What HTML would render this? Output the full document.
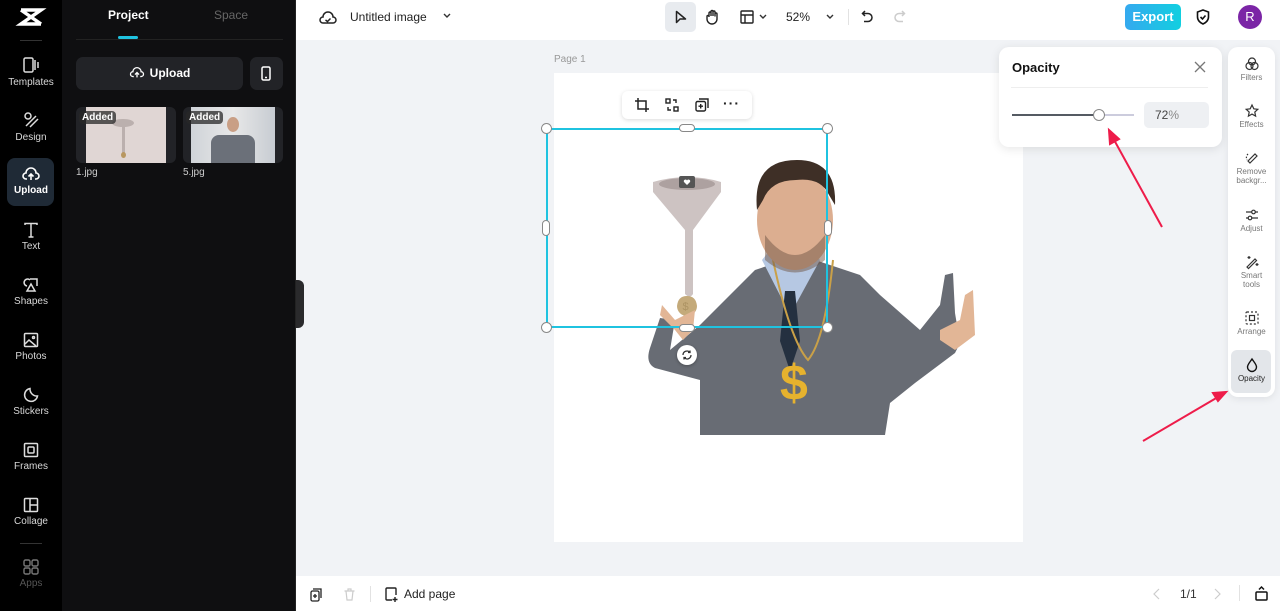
<!DOCTYPE html>
<html><head><meta charset="utf-8"><style>
*{box-sizing:border-box;margin:0;padding:0}
body{width:1280px;height:611px;overflow:hidden;font-family:"Liberation Sans",sans-serif;background:#f1f3f6;position:relative}
.abs{position:absolute}
.nav{left:0;top:0;width:62px;height:611px;background:#000}
.nav .it{position:absolute;left:0;width:62px;text-align:center;color:#d8d8d8;font-size:10px}
.nav .it svg{display:block;margin:0 auto 3px}
.panel{left:62px;top:0;width:234px;height:611px;background:#0f0f11;border-right:1px solid #222}
.top{left:296px;top:0;width:984px;height:40px;background:#fff}
.bot{left:296px;top:576px;width:984px;height:35px;background:#fff}
.rp{left:1228px;top:47px;width:47px;height:350px;background:#fff;border-radius:10px;box-shadow:0 2px 8px rgba(0,0,0,.08)}
.rp .it{position:absolute;left:0;width:47px;text-align:center;font-size:8px;color:#777;line-height:9px}
.rp .it svg{display:block;margin:0 auto 2px}
svg{overflow:visible}
</style></head><body>
<div class="abs nav">
 <svg class="abs" style="left:19px;top:8px" width="24" height="18" viewBox="0 0 24 18"><path d="M2 2h20L2 16h20M2 2l20 14" stroke="#fff" stroke-width="3.5" fill="none"/></svg>
 <div class="abs" style="left:20px;top:40px;width:22px;height:1px;background:#333"></div>
 <div class="it" style="top:56px"><svg width="18" height="18" viewBox="0 0 18 18" fill="none" stroke="#ddd" stroke-width="1.5"><rect x="2" y="2" width="9" height="14" rx="1.5"/><path d="M13 4v10M16 6v6"/></svg>Templates</div>
 <div class="it" style="top:111px"><svg width="18" height="18" viewBox="0 0 18 18" fill="none" stroke="#ddd" stroke-width="1.5"><circle cx="6" cy="5" r="3"/><path d="M4 15l10-10M8 16l8-8"/></svg>Design</div>
 <div class="abs" style="left:7px;top:158px;width:47px;height:48px;background:#1f2a36;border-radius:8px"></div>
 <div class="it" style="top:166px;color:#fff;font-weight:bold"><svg width="18" height="16" viewBox="0 0 18 16" fill="none" stroke="#fff" stroke-width="1.6"><path d="M5 13H4a3 3 0 0 1 0-6 5 5 0 0 1 10 0 3 3 0 0 1 0 6h-1M9 14V8M6.5 10.5L9 8l2.5 2.5"/></svg>Upload</div>
 <div class="it" style="top:222px"><svg width="16" height="16" viewBox="0 0 16 16" fill="none" stroke="#ddd" stroke-width="1.5"><path d="M2 3V1.5h12V3M8 1.5V15M5.5 15h5"/></svg>Text</div>
 <div class="it" style="top:277px"><svg width="16" height="16" viewBox="0 0 16 16" fill="none" stroke="#ddd" stroke-width="1.5"><path d="M4 9a3.5 3.5 0 1 1 3-6M7 2h7v7M8 7l-4 7h8z"/></svg>Shapes</div>
 <div class="it" style="top:332px"><svg width="16" height="16" viewBox="0 0 16 16" fill="none" stroke="#ddd" stroke-width="1.5"><rect x="1.5" y="1.5" width="13" height="13" rx="1"/><path d="M2 12l4-4 7 6"/><circle cx="10.5" cy="5.5" r="1"/></svg>Photos</div>
 <div class="it" style="top:387px"><svg width="16" height="16" viewBox="0 0 16 16" fill="none" stroke="#ddd" stroke-width="1.5"><path d="M14.5 9A6.5 6.5 0 1 1 7 1.5a7 7 0 0 0 7.5 7.5z"/></svg>Stickers</div>
 <div class="it" style="top:442px"><svg width="16" height="16" viewBox="0 0 16 16" fill="none" stroke="#ddd" stroke-width="1.5"><rect x="1.5" y="1.5" width="13" height="13" rx="1"/><rect x="5" y="5" width="6" height="6" rx="1"/></svg>Frames</div>
 <div class="it" style="top:497px"><svg width="16" height="16" viewBox="0 0 16 16" fill="none" stroke="#ddd" stroke-width="1.5"><rect x="1.5" y="1.5" width="13" height="13" rx="1"/><path d="M7 1.5v13M7 8h7.5"/></svg>Collage</div>
 <div class="abs" style="left:20px;top:543px;width:22px;height:1px;background:#333"></div>
 <div class="it" style="top:559px;color:#555"><svg width="16" height="16" viewBox="0 0 16 16" fill="none" stroke="#777" stroke-width="1.4"><rect x="1" y="1" width="6" height="6" rx="1.5"/><rect x="9" y="1" width="6" height="6" rx="1.5"/><rect x="1" y="9" width="6" height="6" rx="1.5"/><rect x="9" y="9" width="6" height="6" rx="1.5"/></svg>Apps</div>
</div>
<div class="abs panel">
 <div class="abs" style="left:46px;top:8px;font-size:12px;font-weight:bold;color:#fff">Project</div>
 <div class="abs" style="left:152px;top:8px;font-size:12px;color:#666">Space</div>
 <div class="abs" style="left:56px;top:36px;width:20px;height:3px;background:#1fc3e0;border-radius:2px"></div>
 <div class="abs" style="left:14px;top:39px;width:207px;height:1px;background:#222"></div>
 <div class="abs" style="left:14px;top:57px;width:167px;height:33px;background:#222327;border-radius:7px;color:#fff;font-size:12px;font-weight:bold;text-align:center;line-height:33px"><svg width="16" height="13" viewBox="0 0 18 16" style="vertical-align:-2px;margin-right:5px" fill="none" stroke="#fff" stroke-width="1.6"><path d="M5 13H4a3 3 0 0 1 0-6 5 5 0 0 1 10 0 3 3 0 0 1 0 6h-1M9 14V8M6.5 10.5L9 8l2.5 2.5"/></svg>Upload</div>
 <div class="abs" style="left:188px;top:57px;width:33px;height:33px;background:#222327;border-radius:7px"><svg class="abs" style="left:11px;top:9px" width="10" height="15" viewBox="0 0 10 15" fill="none" stroke="#fff" stroke-width="1.5"><rect x="1" y="1" width="8" height="13" rx="1.5"/><path d="M4 11.5h2"/></svg></div>
 <div class="abs" style="left:14px;top:107px;width:100px;height:56px;background:#222327;border-radius:6px;overflow:hidden"><div class="abs" style="left:10px;top:0;width:80px;height:56px;background:#e0d6d4"></div><div class="abs" style="left:36px;top:12px;width:22px;height:8px;background:#bbb0ae;border-radius:50%"></div><div class="abs" style="left:46px;top:20px;width:3px;height:26px;background:#bbb0ae"></div><div class="abs" style="left:45px;top:45px;width:5px;height:6px;background:#b89760;border-radius:50%"></div><div class="abs" style="left:3px;top:4px;background:rgba(40,40,40,.75);color:#fff;font-size:10px;font-weight:bold;padding:1px 3px;border-radius:4px">Added</div></div>
 <div class="abs" style="left:121px;top:107px;width:100px;height:56px;background:#222327;border-radius:6px;overflow:hidden"><div class="abs" style="left:8px;top:0;width:84px;height:56px;background:linear-gradient(90deg,#cfd3d8,#e8e8e8 50%,#c7ccd2)"></div><div class="abs" style="left:28px;top:28px;width:44px;height:28px;background:#6b7079;border-radius:8px 8px 0 0"></div><div class="abs" style="left:44px;top:10px;width:12px;height:15px;background:#c99f85;border-radius:50%"></div><div class="abs" style="left:3px;top:4px;background:rgba(40,40,40,.75);color:#fff;font-size:10px;font-weight:bold;padding:1px 3px;border-radius:4px">Added</div></div>
 <div class="abs" style="left:14px;top:167px;font-size:10px;color:#ccc">1.jpg</div>
 <div class="abs" style="left:121px;top:167px;font-size:10px;color:#ccc">5.jpg</div>
</div>
<div class="abs" style="left:296px;top:280px;width:8px;height:48px;background:#2a2a2c;border-radius:0 6px 6px 0"></div>
<div class="abs top">
 <svg class="abs" style="left:23px;top:10px" width="18" height="16" viewBox="0 0 18 16" fill="none" stroke="#222" stroke-width="1.5"><path d="M5 13H4a3 3 0 0 1 0-6 5 5 0 0 1 10 0 3 3 0 0 1 0 6H5zM6.5 10l2 1.5 3-3"/></svg>
 <div class="abs" style="left:54px;top:10px;font-size:12px;color:#222">Untitled image</div>
 <svg class="abs" style="left:147px;top:13px" width="8" height="6" viewBox="0 0 8 6" fill="none" stroke="#333" stroke-width="1.4"><path d="M1 1l3 3 3-3"/></svg>
 <div class="abs" style="left:369px;top:2px;width:31px;height:30px;background:#e8ebef;border-radius:5px"></div>
 <svg class="abs" style="left:379px;top:10px" width="12" height="14" viewBox="0 0 12 14" fill="none" stroke="#222" stroke-width="1.5"><path d="M1.5 1.5v11l3.5-3.5h5.5z" stroke-linejoin="round"/></svg>
 <svg class="abs" style="left:410px;top:9px" width="14" height="16" viewBox="0 0 14 16" fill="none" stroke="#222" stroke-width="1.4"><path d="M3 8V4a1 1 0 0 1 2 0v3V2.5a1 1 0 0 1 2 0V7V3a1 1 0 0 1 2 0v4.5V5a1 1 0 0 1 2 0v5a5 5 0 0 1-10 0V7.5a1 1 0 0 1 2 0z"/></svg>
 <svg class="abs" style="left:444px;top:10px" width="14" height="14" viewBox="0 0 14 14" fill="none" stroke="#222" stroke-width="1.4"><rect x="1" y="1" width="12" height="12" rx="1"/><path d="M1 5h12M5 5v8"/></svg>
 <svg class="abs" style="left:463px;top:14px" width="8" height="6" viewBox="0 0 8 6" fill="none" stroke="#333" stroke-width="1.4"><path d="M1 1l3 3 3-3"/></svg>
 <div class="abs" style="left:490px;top:10px;font-size:12px;color:#222">52%</div>
 <svg class="abs" style="left:530px;top:14px" width="8" height="6" viewBox="0 0 8 6" fill="none" stroke="#333" stroke-width="1.4"><path d="M1 1l3 3 3-3"/></svg>
 <div class="abs" style="left:552px;top:9px;width:1px;height:16px;background:#e2e2e2"></div>
 <svg class="abs" style="left:565px;top:10px" width="12" height="13" viewBox="0 0 12 13" fill="none" stroke="#222" stroke-width="1.5"><path d="M4 1L1.5 3.5 4 6M1.5 3.5H7a4 4 0 0 1 0 8H3"/></svg>
 <svg class="abs" style="left:598px;top:10px" width="12" height="13" viewBox="0 0 12 13" fill="none" stroke="#ccc" stroke-width="1.5"><path d="M8 1l2.5 2.5L8 6M10.5 3.5H5a4 4 0 0 0 0 8h4"/></svg>
 <div class="abs" style="left:829px;top:4px;width:56px;height:26px;border-radius:5px;background:linear-gradient(90deg,#35a9ef,#12cfe0);color:#fff;font-weight:bold;font-size:13px;text-align:center;line-height:26px">Export</div>
 <svg class="abs" style="left:900px;top:9px" width="14" height="16" viewBox="0 0 14 16" fill="none" stroke="#111" stroke-width="1.6"><path d="M7 1l5.5 2v5c0 3.5-3 6-5.5 7C4.5 14 1.5 11.5 1.5 8V3zM4.5 8l2 2 3-3.5"/></svg>
 <div class="abs" style="left:942px;top:5px;width:24px;height:24px;border-radius:50%;background:#7b25a6;color:#fff;font-size:13px;text-align:center;line-height:24px">R</div>
</div>
<div class="abs" style="left:554px;top:54px;font-size:10px;color:#999">Page 1</div>
<div class="abs" style="left:554px;top:73px;width:469px;height:469px;background:#fff"></div>
<!-- funnel -->
<svg class="abs" style="left:640px;top:170px" width="100" height="145" viewBox="0 0 100 145">
 <path d="M13 12q35-10 68 0v10L53 60v64q-3 5-8 0V60L13 22z" fill="#cdc3c2"/>
 <ellipse cx="47" cy="14" rx="28" ry="6" fill="#ada1a0"/>
 <rect x="39" y="6" width="16" height="12" rx="2" fill="#555"/>
 <path d="M44 12l3 3 3-3a1.5 1.5 0 0 0-3-1.5 1.5 1.5 0 0 0-3 1.5z" fill="#fff"/>
 <path d="M47 126q9 0 10 10a10 10 0 0 1-20 0q1-10 10-10z" fill="#c4aa7a"/>
 <text x="42.5" y="140" font-size="11" fill="#ad9464" font-family="Liberation Sans">$</text>
</svg>
<!-- person -->
<svg class="abs" style="left:640px;top:155px" width="345" height="285" viewBox="0 0 345 285">
 <path d="M60 280V225l-45-12q-10-5-5-20l10-30 15 2-5 30 30-25 55-55 45-15 60 20 20 20 40 35 20-25 5-30 8-2 2 40 5 30-5 10-40 30-25 20-5 32z" fill="#686c74"/>
 <path d="M35 175l-15-15 2-10 13 15 20-10-2 20-10 10z" fill="#e2b696"/>
 <path d="M300 175l20-10 5-25 8-5 2 45-20 15-15-10z" fill="#e2b696"/>
 <path d="M122 105l28 55 30-55-10-10h-40z" fill="#b6c8e3"/>
 <path d="M145 136h10l5 50-10 30-10-30z" fill="#243040"/>
 <path d="M133 105q17 80 35 100 17-20 25-100" fill="none" stroke="#c9a048" stroke-width="2"/>
 <ellipse cx="155" cy="65" rx="38" ry="50" fill="#dcae90"/>
 <path d="M117 55q-5-50 40-50 40 0 38 45l-6-10q-8-18-33-15-25 0-33 20z" fill="#3e2f26"/>
 <path d="M125 80q30 40 60 0v25q-30 25-60 0z" fill="#6f5545" opacity=".5"/>
 <text x="140" y="245" font-size="50" font-weight="bold" fill="#e6b22e" font-family="Liberation Sans">$</text>
</svg>
<!-- selection -->
<div class="abs" style="left:546px;top:128px;width:282px;height:200px;border:2px solid #1fc3e0"></div>
<div class="abs" style="left:541px;top:123px;width:11px;height:11px;border-radius:50%;background:#fff;border:1px solid #888"></div>
<div class="abs" style="left:822px;top:123px;width:11px;height:11px;border-radius:50%;background:#fff;border:1px solid #888"></div>
<div class="abs" style="left:541px;top:322px;width:11px;height:11px;border-radius:50%;background:#fff;border:1px solid #888"></div>
<div class="abs" style="left:822px;top:322px;width:11px;height:11px;border-radius:50%;background:#fff;border:1px solid #888"></div>
<div class="abs" style="left:679px;top:124px;width:16px;height:8px;border-radius:4px;background:#fff;border:1px solid #888"></div>
<div class="abs" style="left:679px;top:324px;width:16px;height:8px;border-radius:4px;background:#fff;border:1px solid #888"></div>
<div class="abs" style="left:542px;top:220px;width:8px;height:16px;border-radius:4px;background:#fff;border:1px solid #888"></div>
<div class="abs" style="left:824px;top:220px;width:8px;height:16px;border-radius:4px;background:#fff;border:1px solid #888"></div>
<div class="abs" style="left:677px;top:345px;width:20px;height:20px;border-radius:50%;background:#fff;box-shadow:0 1px 3px rgba(0,0,0,.3)"><svg class="abs" style="left:5px;top:5px" width="10" height="10" viewBox="0 0 10 10" fill="none" stroke="#333" stroke-width="1.3"><path d="M1 5a4 4 0 0 1 7-2.6M9 5a4 4 0 0 1-7 2.6M8 0.5V2.5H6M2 9.5V7.5H4"/></svg></div>
<div class="abs" style="left:622px;top:91px;width:130px;height:28px;background:#fff;border-radius:6px;box-shadow:0 1px 4px rgba(0,0,0,.15)">
 <svg class="abs" style="left:13px;top:7px" width="14" height="14" viewBox="0 0 14 14" fill="none" stroke="#222" stroke-width="1.5"><path d="M3 0v11h11M0 3h11v11"/></svg>
 <svg class="abs" style="left:43px;top:7px" width="14" height="14" viewBox="0 0 14 14" fill="none" stroke="#222" stroke-width="1.4"><rect x="1" y="1" width="4" height="4"/><rect x="9" y="9" width="4" height="4"/><path d="M8 2h3v3M6 12H3V9"/></svg>
 <svg class="abs" style="left:73px;top:7px" width="14" height="14" viewBox="0 0 14 14" fill="none" stroke="#222" stroke-width="1.4"><rect x="1" y="3.5" width="9.5" height="9.5" rx="1.5"/><path d="M4 1h9v9M5.7 6v4.5M3.5 8.2h4.5"/></svg>
 <div class="abs" style="left:101px;top:4px;font-size:14px;font-weight:bold;color:#222;letter-spacing:1px">···</div>
</div>
<!-- opacity popup -->
<div class="abs" style="left:999px;top:47px;width:223px;height:100px;background:#fff;border-radius:10px;box-shadow:0 2px 10px rgba(0,0,0,.1)">
 <div class="abs" style="left:13px;top:13px;font-size:13px;font-weight:bold;color:#111">Opacity</div>
 <svg class="abs" style="left:196px;top:15px" width="10" height="10" viewBox="0 0 10 10" stroke="#777" stroke-width="1.3"><path d="M0 0l10 10M10 0L0 10"/></svg>
 <div class="abs" style="left:12px;top:40px;width:197px;height:1px;background:#eee"></div>
 <div class="abs" style="left:13px;top:67px;width:87px;height:2px;background:#555b63"></div>
 <div class="abs" style="left:100px;top:67px;width:35px;height:2px;background:#ccd"></div>
 <div class="abs" style="left:94px;top:62px;width:12px;height:12px;border-radius:50%;background:#fff;border:1px solid #888"></div>
 <div class="abs" style="left:145px;top:55px;width:65px;height:26px;background:#eef0f3;border-radius:5px;font-size:12px;color:#444;line-height:26px;padding-left:11px">72<span style="color:#888">%</span></div>
</div>
<!-- right panel -->
<div class="abs rp">
 <div class="it" style="top:10px"><svg width="14" height="14" viewBox="0 0 14 14" fill="none" stroke="#333" stroke-width="1.2"><circle cx="7" cy="4.5" r="3.5"/><circle cx="4.5" cy="9" r="3.5"/><circle cx="9.5" cy="9" r="3.5"/></svg>Filters</div>
 <div class="it" style="top:57px"><svg width="14" height="14" viewBox="0 0 14 14" fill="none" stroke="#333" stroke-width="1.2"><path d="M7 1l1.8 3.8 4 .5-3 2.8.8 4-3.6-2-3.6 2 .8-4-3-2.8 4-.5z"/></svg>Effects</div>
 <div class="it" style="top:104px"><svg width="14" height="14" viewBox="0 0 14 14" fill="none" stroke="#333" stroke-width="1.2"><path d="M5 12l7-7-2-2-7 7z"/><path d="M3 3a5 5 0 0 0-1 6" stroke-dasharray="1.5 1.5"/></svg>Remove<br>backgr...</div>
 <div class="it" style="top:161px"><svg width="14" height="14" viewBox="0 0 14 14" fill="none" stroke="#333" stroke-width="1.2"><path d="M1 4h12M1 10h12"/><circle cx="8.5" cy="4" r="1.8" fill="#fff"/><circle cx="5" cy="10" r="1.8" fill="#fff"/></svg>Adjust</div>
 <div class="it" style="top:208px"><svg width="14" height="14" viewBox="0 0 14 14" fill="none" stroke="#333" stroke-width="1.2"><path d="M2 12l8-8 1.5 1.5-8 8zM4 1v3M2.5 2.5h3M12 8v3M10.5 9.5h3"/></svg>Smart<br>tools</div>
 <div class="it" style="top:264px"><svg width="14" height="14" viewBox="0 0 14 14" fill="none" stroke="#333" stroke-width="1.2"><rect x="1" y="1" width="12" height="12" rx="1" stroke-dasharray="2 2"/><rect x="4.5" y="4.5" width="5" height="5"/></svg>Arrange</div>
 <div class="abs" style="left:3px;top:303px;width:40px;height:43px;background:#e3e6ea;border-radius:6px"></div>
 <div class="it" style="top:311px;color:#222"><svg width="12" height="14" viewBox="0 0 12 14" fill="none" stroke="#111" stroke-width="1.4"><path d="M6 1C4 4 1.5 6.5 1.5 9a4.5 4.5 0 0 0 9 0C10.5 6.5 8 4 6 1z"/></svg>Opacity</div>
</div>
<!-- arrows -->
<svg class="abs" style="left:0;top:0" width="1280" height="611"><g stroke="#ee1c4a" stroke-width="2" fill="#ee1c4a"><path d="M1162 227L1113 138"/><path d="M1109 130l1 14 9-5z"/><path d="M1143 441L1218 397"/><path d="M1226 392l-13 1 5 8z"/></g></svg>
<div class="abs bot">
 <svg class="abs" style="left:14px;top:12px" width="12" height="14" viewBox="0 0 12 14" fill="none" stroke="#222" stroke-width="1.3"><rect x="1" y="3" width="8" height="10" rx="1.5"/><path d="M3 1h8v9M5 6v4M3 8h4"/></svg>
 <svg class="abs" style="left:48px;top:12px" width="11" height="13" viewBox="0 0 11 13" fill="none" stroke="#ccc" stroke-width="1.2"><path d="M0.5 3h10M4 3V1h3v2M2 3l1 9h5l1-9"/></svg>
 <div class="abs" style="left:74px;top:10px;width:1px;height:16px;background:#e2e2e2"></div>
 <svg class="abs" style="left:89px;top:11px" width="13" height="15" viewBox="0 0 13 15" fill="none" stroke="#222" stroke-width="1.4"><path d="M7 13H2a1 1 0 0 1-1-1V2a1 1 0 0 1 1-1h8a1 1 0 0 1 1 1v6M10 10v5M7.5 12.5h5"/></svg>
 <div class="abs" style="left:108px;top:11px;font-size:12px;color:#222">Add page</div>
 <svg class="abs" style="left:857px;top:12px" width="7" height="12" viewBox="0 0 7 12" fill="none" stroke="#ccc" stroke-width="1.2"><path d="M6 1L1 6l5 5"/></svg>
 <div class="abs" style="left:884px;top:11px;font-size:12px;color:#333">1/1</div>
 <svg class="abs" style="left:918px;top:12px" width="7" height="12" viewBox="0 0 7 12" fill="none" stroke="#ccc" stroke-width="1.2"><path d="M1 1l5 5-5 5"/></svg>
 <div class="abs" style="left:943px;top:9px;width:1px;height:16px;background:#e2e2e2"></div>
 <svg class="abs" style="left:959px;top:10px" width="13" height="15" viewBox="0 0 13 15" fill="none" stroke="#111" stroke-width="1.5"><rect x="1" y="6" width="11" height="8" rx="1"/><path d="M4 3.5l2.5-2.5 2.5 2.5"/></svg>
</div>
</body></html>
